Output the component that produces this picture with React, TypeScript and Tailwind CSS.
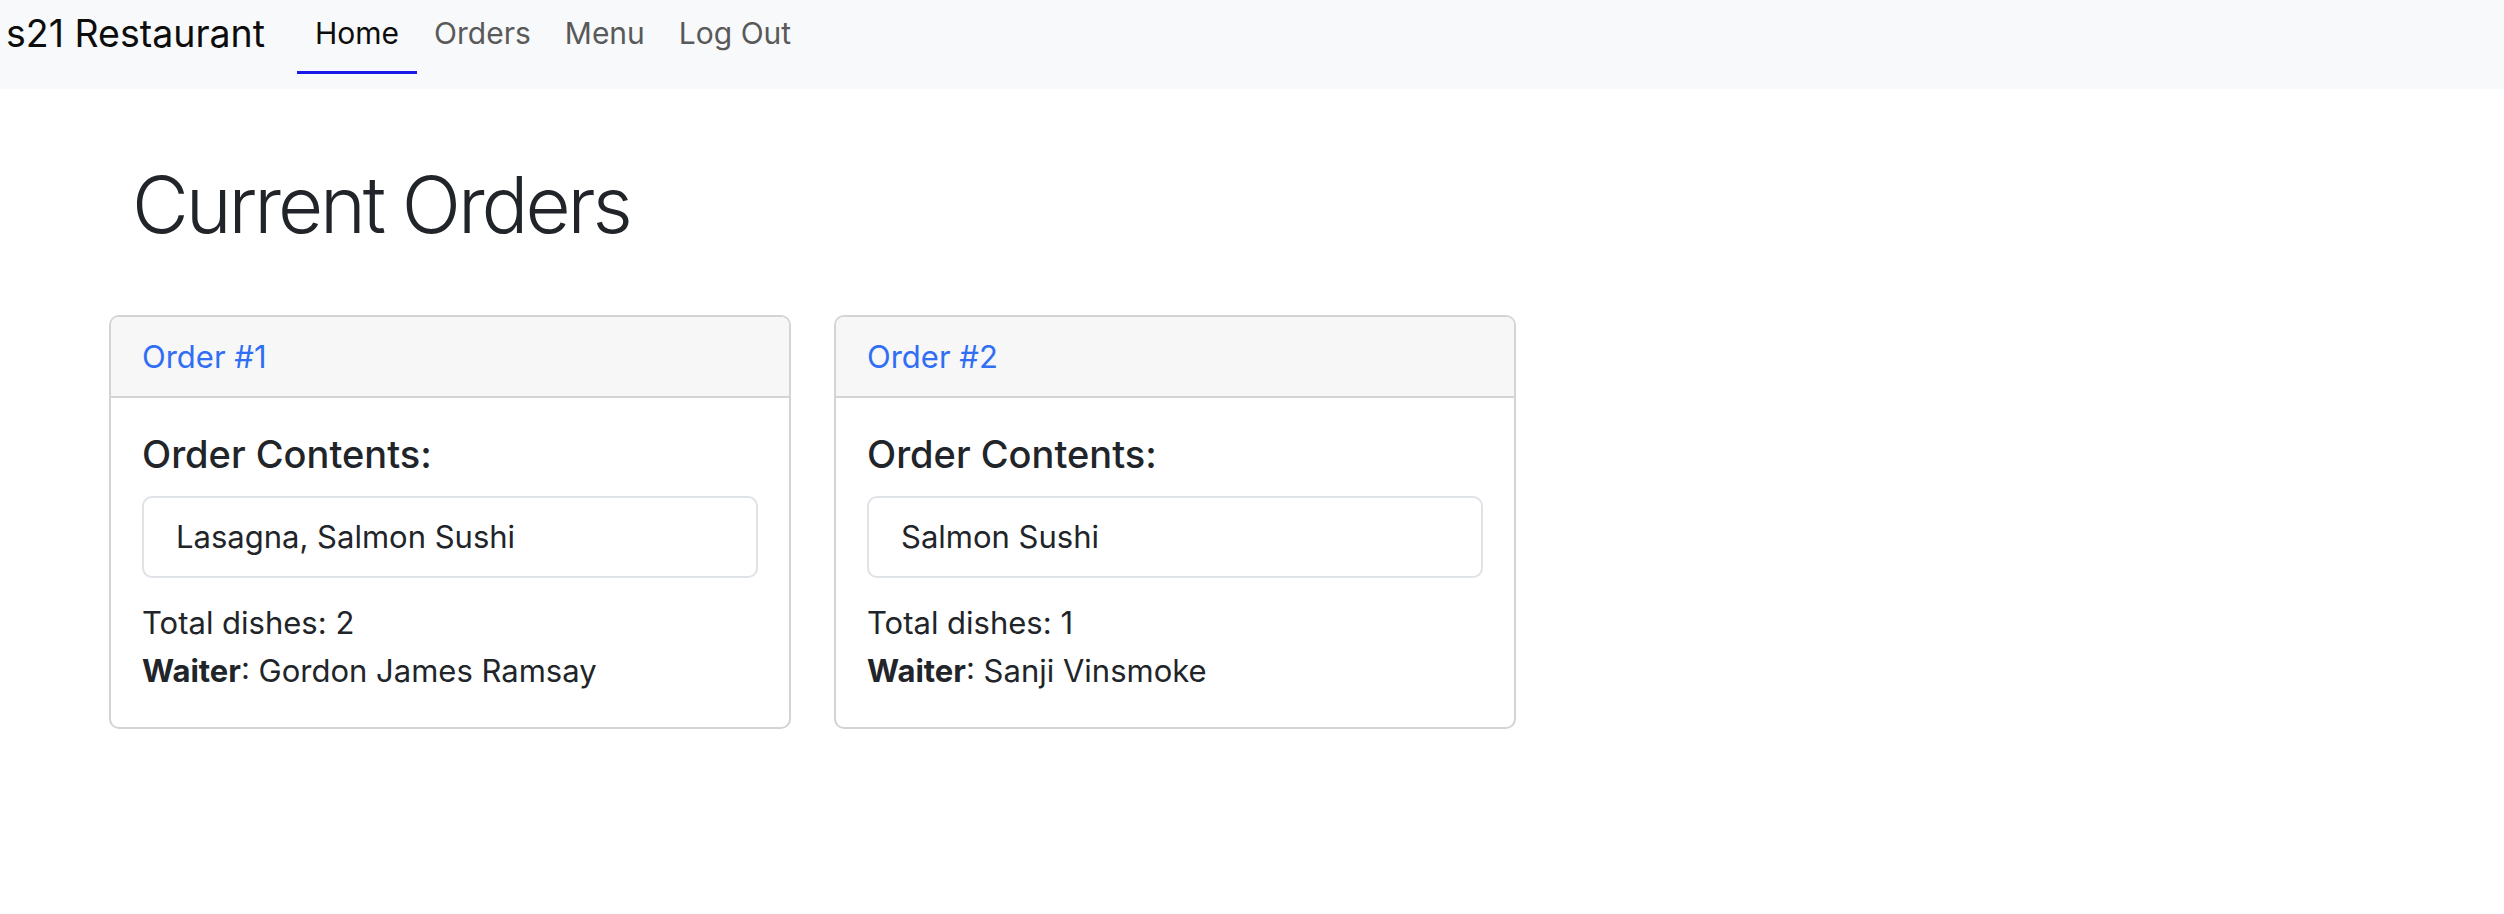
import React from "react";

const orders = [
  { id: 1, contents: "Lasagna, Salmon Sushi", total: 2, waiter: "Gordon James Ramsay" },
  { id: 2, contents: "Salmon Sushi", total: 1, waiter: "Sanji Vinsmoke" },
];

export default function App() {
  return (
    <div className="min-h-[914px] bg-white text-[#212529]" style={{ fontFamily: "Inter, 'Noto Sans', sans-serif" }}>
      <nav className="h-[89px] bg-[#f8f9fa] flex items-start">
        <div className="pl-[6px] pt-[10px] text-[37.5px] leading-[48px] text-[#0d0d0d]">s21 Restaurant</div>
        <div className="flex ml-[32px] pt-[9px]">
          <a className="block px-[18px] text-[30px] leading-[48px] text-[#0d0d0d] border-b-[3px] border-[#1a1ae6] pb-[14px]">Home</a>
          <a className="block px-[17px] text-[30px] leading-[48px] text-[#595959]">Orders</a>
          <a className="block px-[17px] text-[30px] leading-[48px] text-[#595959]">Menu</a>
          <a className="block px-[17px] text-[30px] leading-[48px] text-[#595959]">Log Out</a>
        </div>
      </nav>
      <main className="pl-[109px]">
        <h1 className="pl-[23px] pt-[69px] text-[78px] font-light leading-[94px] tracking-[-3.1px]">Current Orders</h1>
        <div className="flex gap-[43px] mt-[63px]">
          {orders.map((o) => (
            <div key={o.id} className="w-[682px] border-2 border-[#d4d4d4] rounded-[10px] overflow-hidden">
              <div className="bg-[#f7f7f7] border-b-2 border-[#d4d4d4] px-[31px] py-[16px] text-[31px] leading-[47px] text-[#2f6ef5]">
                Order #{o.id}
              </div>
              <div className="px-[31px] pt-[33px] pb-[32px]">
                <h4 className="text-[38px] font-medium leading-[46px]">Order Contents:</h4>
                <div className="mt-[19px] border-2 border-[#dfe2e6] rounded-[10px] px-[32px] py-[15px] text-[31px] leading-[48px]">
                  {o.contents}
                </div>
                <div className="mt-[21px] text-[31px] leading-[48px]">Total dishes: {o.total}</div>
                <div className="text-[31px] leading-[48px]">
                  <span className="font-bold">Waiter</span>: {o.waiter}
                </div>
              </div>
            </div>
          ))}
        </div>
      </main>
    </div>
  );
}
